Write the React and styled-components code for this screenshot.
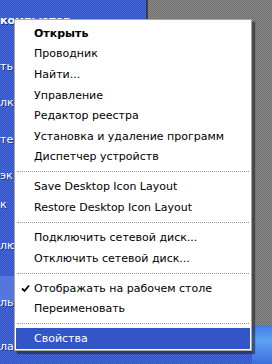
import React from "react";
import styled, { createGlobalStyle } from "styled-components";

const Global = createGlobalStyle`
  html, body { margin: 0; padding: 0; overflow: hidden; background: #3a5ccc; }
  * { box-sizing: border-box; }
`;

const Desktop = styled.div`
  position: relative;
  width: 272px;
  height: 364px;
  overflow: hidden;
  font-family: "DejaVu Sans", Verdana, sans-serif;
  background:
    repeating-conic-gradient(#3453c4 0 25%, #4468d8 0 50%) 0 0 / 2px 2px;
`;

const DimmedWindow = styled.div`
  position: absolute;
  left: 146px;
  top: 0;
  right: 0;
  height: 325px;
  border-left: 2px solid #3c3c44;
  background: repeating-conic-gradient(#8c8c8c 0 25%, #6c6c6c 0 50%) 0 0 / 2px 2px;
`;

const CornerGlow = styled.div`
  position: absolute;
  left: 252px;
  top: 325px;
  right: 0;
  bottom: 0;
  background: linear-gradient(180deg, #3f7de8 0%, #5da2f4 40%, #3c6ee0 100%);
`;

const StripGlow = styled.div`
  position: absolute;
  left: 0;
  top: 276px;
  width: 16px;
  height: 26px;
  background: #5577dd;
`;

const Label = styled.span`
  position: absolute;
  left: 0;
  top: ${(p) => p.$top}px;
  color: #ffffff;
  font-size: 11px;
  line-height: 12px;
  white-space: nowrap;
  font-weight: ${(p) => (p.$bold ? 700 : 400)};
  text-shadow: 1px 1px 0 rgba(0, 0, 40, 0.45);
`;

const Menu = styled.div`
  position: absolute;
  left: 14px;
  top: 19px;
  width: 238px;
  display: flex;
  flex-direction: column;
  padding: 3px 1px 1px;
  background: #ffffff;
  border: 1px solid #aca899;
  box-shadow: 3px 3px 1px rgba(30, 30, 40, 0.55);
  font-family: "DejaVu Sans", Verdana, sans-serif;
  font-size: 11px;
`;

const Item = styled.div`
  position: relative;
  height: 20.6px;
  display: flex;
  align-items: center;
  padding-left: 18px;
  white-space: nowrap;
  color: ${(p) => (p.$active ? "#ffffff" : "#000000")};
  background: ${(p) => (p.$active ? "#3355c8" : "transparent")};
  font-weight: ${(p) => (p.$bold ? 700 : 400)};
`;

const Check = styled.svg`
  position: absolute;
  left: 5px;
  top: 6px;
  width: 9px;
  height: 9px;
`;

const Separator = styled.div`
  height: 9.4px;
  display: flex;
  align-items: center;
  padding: 0 1px;
  &::after {
    content: "";
    flex: 1;
    border-top: 1px dotted #9a9a9a;
  }
`;

const groups = [
  [
    { t: "Открыть", bold: true },
    { t: "Проводник" },
    { t: "Найти..." },
    { t: "Управление" },
    { t: "Редактор реестра" },
    { t: "Установка и удаление программ" },
    { t: "Диспетчер устройств" },
  ],
  [{ t: "Save Desktop Icon Layout" }, { t: "Restore Desktop Icon Layout" }],
  [{ t: "Подключить сетевой диск..." }, { t: "Отключить сетевой диск..." }],
  [{ t: "Отображать на рабочем столе", check: true }, { t: "Переименовать" }],
  [{ t: "Свойства", active: true }],
];

const labels = [
  { t: "компьютер", top: 15, bold: true },
  { t: "ть", top: 61 },
  { t: "лк", top: 97 },
  { t: "те", top: 134 },
  { t: "эк", top: 170 },
  { t: "к", top: 199 },
  { t: "лю", top: 240 },
  { t: "ль", top: 297 },
  { t: "ла", top: 341 },
];

export default function App() {
  return (
    <>
      <Global />
      <Desktop>
        <DimmedWindow />
        <CornerGlow />
        <StripGlow />
        {labels.map((l) => (
          <Label key={l.t + l.top} $top={l.top} $bold={l.bold}>
            {l.t}
          </Label>
        ))}
        <Menu>
          {groups.map((g, gi) => (
            <React.Fragment key={gi}>
              {gi > 0 && <Separator />}
              {g.map((it) => (
                <Item key={it.t} $bold={it.bold} $active={it.active}>
                  {it.check && (
                    <Check viewBox="0 0 9 9">
                      <path d="M1 4.5 L3.5 7 L8 1.5" fill="none" stroke="#000" strokeWidth="1.8" />
                    </Check>
                  )}
                  {it.t}
                </Item>
              ))}
            </React.Fragment>
          ))}
        </Menu>
      </Desktop>
    </>
  );
}
